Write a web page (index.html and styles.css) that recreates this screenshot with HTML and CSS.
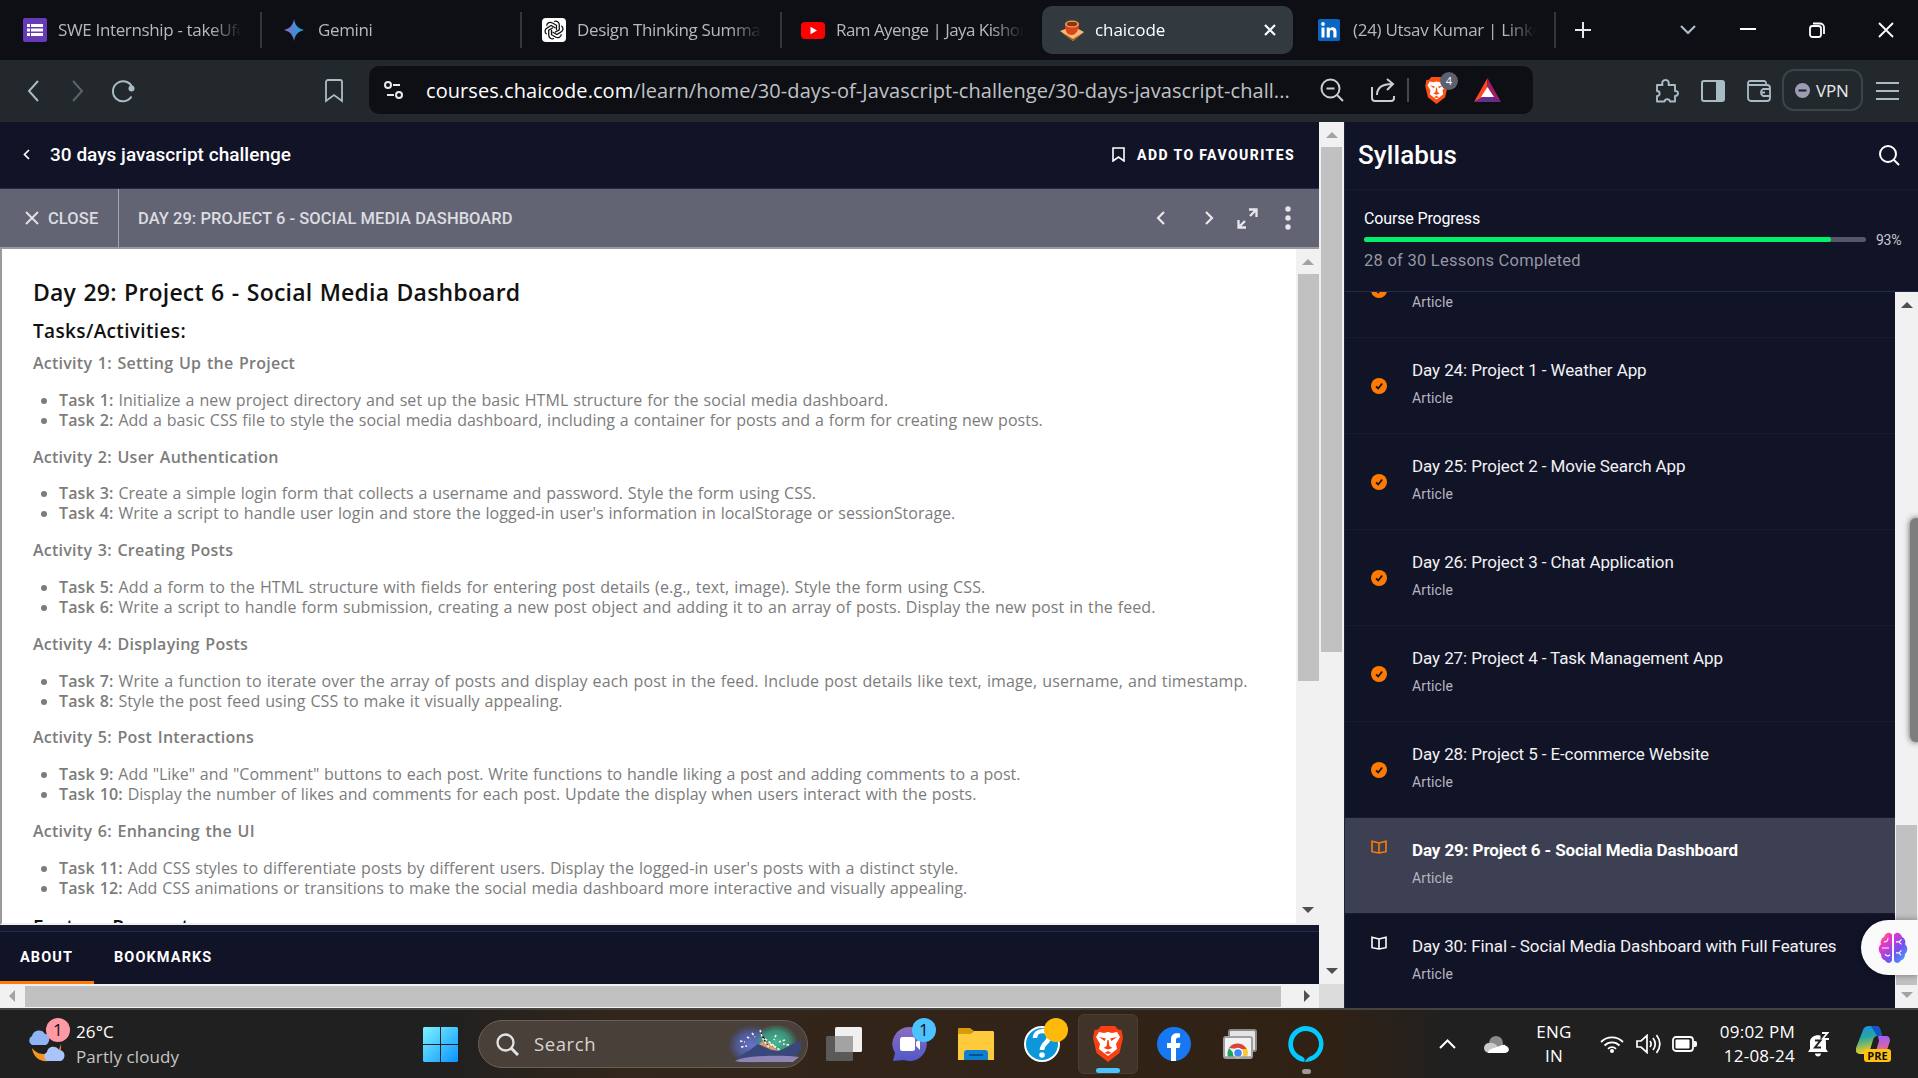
FILE: index.html
```html
<!DOCTYPE html>
<html lang="en">
<head>
<meta charset="utf-8">
<title>chaicode</title>
<link rel="stylesheet" href="styles.css">
</head>
<body>
<div class="screen">
  <header class="tabs">
    <div class="tab">
      <svg width="24" height="24" viewBox="0 0 24 24"><rect width="24" height="24" rx="2" fill="#673ab7"/><g fill="#fff"><rect x="4" y="6" width="3" height="3"/><rect x="8" y="6" width="12" height="3"/><rect x="4" y="10.500" width="3" height="3"/><rect x="8" y="10.500" width="12" height="3"/><rect x="4" y="15" width="3" height="3"/><rect x="8" y="15" width="12" height="3"/></g></svg>
      <span class="tab-title">SWE Internship - takeUforward</span>
    </div>
    <div class="tab">
      <svg width="24" height="24" viewBox="0 0 24 24"><defs><linearGradient id="gem" x1="0" x2="1"><stop offset="0" stop-color="#9168c0"/><stop offset=".45" stop-color="#5684d1"/><stop offset="1" stop-color="#1ba1e3"/></linearGradient></defs><path d="M11 1c1 6 4 9.500 10 11-6 1.500-9 5-10 11C10 17 7 13.500 1 12 7 10.500 10 7 11 1z" fill="url(#gem)"/></svg>
      <span class="tab-title">Gemini</span>
    </div>
    <div class="tab tab-chat">
      <svg width="24" height="24" viewBox="0 0 24 24"><rect width="24" height="24" rx="4" fill="#fff"/><g fill="none" stroke="#111" stroke-width="1.300"><path id="petal" d="M12 3.500c2.600-1.200 5.500.8 5.300 3.700v4.600l-4.300 2.500"/><use href="#petal" transform="rotate(60 12 12)"/><use href="#petal" transform="rotate(120 12 12)"/><use href="#petal" transform="rotate(180 12 12)"/><use href="#petal" transform="rotate(240 12 12)"/><use href="#petal" transform="rotate(300 12 12)"/></g></svg>
      <span class="tab-title">Design Thinking Summary</span>
    </div>
    <div class="tab tab-video">
      <svg width="24" height="24" viewBox="0 0 24 24"><rect y="4" width="24" height="17" rx="4" fill="#f00"/><path d="M9.500 8.700l6.500 3.800-6.500 3.800z" fill="#fff"/></svg>
      <span class="tab-title">Ram Ayenge | Jaya Kishori</span>
    </div>
    <div class="tab tab-active">
      <svg width="24" height="24" viewBox="0 0 24 24"><path d="M0 13l13-5 11 6-11 9z" fill="#f7b977"/><path d="M0 13l13 8 11-7-11 9z" fill="#a8561f"/><path d="M5 7c0 6 2 10 6.500 10S19 12 19 6z" fill="#d8471c"/><ellipse cx="12" cy="6" rx="7" ry="3.500" fill="#f3a35b"/><ellipse cx="12" cy="6" rx="5.300" ry="2.300" fill="#8e3413"/></svg>
      <span class="tab-title">chaicode</span>
      <svg width="12" height="12" viewBox="0 0 12 12"><path d="M1 1l10 10M11 1L1 11" stroke="#fff" stroke-width="2.200"/></svg>
    </div>
    <div class="tab tab-linked">
      <svg width="22" height="22" viewBox="0 0 22 22"><rect width="22" height="22" rx="2" fill="#0a66c2"/><g fill="#fff"><rect x="3.500" y="8.500" width="3" height="10"/><circle cx="5" cy="5" r="1.900"/><path d="M8.700 8.500h3v1.400c1.400-2.600 6.800-2.400 6.800 2.600v6h-3.100v-5.300c0-3-3.600-2.800-3.600 0v5.300h-3.100z"/></g></svg>
      <span class="tab-title">(24) Utsav Kumar | LinkedIn</span>
    </div>
    <div class="window-tools">
      <svg width="16" height="16" viewBox="0 0 16 16"><path d="M8 0v16M0 8h16" stroke="#e8e8e8" stroke-width="2"/></svg>
      <svg class="caret" width="16" height="10" viewBox="0 0 16 10"><path d="M1 1l7 7 7-7" fill="none" stroke="#a9bcc6" stroke-width="2.200"/></svg>
      <svg width="16" height="16" viewBox="0 0 16 16"><path d="M0 7h16" stroke="#fff" stroke-width="2"/></svg>
      <svg width="16" height="16" viewBox="0 0 16 16"><g fill="none" stroke="#fff" stroke-width="1.800"><rect x="1" y="4" width="11" height="11" rx="2.500"/><path d="M4 1.500h7a4 4 0 0 1 4 4v6.500"/></g></svg>
      <svg width="16" height="16" viewBox="0 0 16 16"><path d="M1 1l14 14M15 1L1 15" stroke="#fff" stroke-width="1.800"/></svg>
    </div>
  </header>

  <div class="toolbar">
    <svg class="nav-back" width="12" height="22" viewBox="0 0 12 22"><path d="M11 1L2 11l9 10" fill="none" stroke="#a9bcc6" stroke-width="2"/></svg>
    <svg class="nav-next" width="12" height="22" viewBox="0 0 12 22"><path d="M1 1l9 10-9 10" fill="none" stroke="#5b656b" stroke-width="2"/></svg>
    <svg class="nav-reload" width="24" height="24" viewBox="0 0 24 24"><path d="M20.500 17.500A10 10 0 1 1 21 8" fill="none" stroke="#a9bcc6" stroke-width="2"/><circle cx="20.500" cy="9.500" r="3" fill="#a9bcc6"/></svg>
    <svg class="nav-mark" width="18" height="24" viewBox="0 0 18 24"><path d="M1 3a2 2 0 0 1 2-2h12a2 2 0 0 1 2 2v19l-8-6-8 6z" fill="none" stroke="#a9bcc6" stroke-width="1.800"/></svg>
    <div class="omnibox">
      <svg width="19" height="18" viewBox="0 0 19 18"><g fill="none" stroke="#e6e9ea" stroke-width="2"><circle cx="4" cy="4" r="3"/><path d="M9 4h7M3 14h7"/><circle cx="15" cy="14" r="3"/></g></svg>
      <div class="url"><b>courses.chaicode.com</b>/learn/home/30-days-of-Javascript-challenge/30-days-javascript-chall...</div>
      <svg class="i-zoom" width="24" height="24" viewBox="0 0 24 24"><g fill="none" stroke="#c9ced1" stroke-width="2"><circle cx="10.500" cy="10.500" r="9"/><path d="M17 17l6 6M6.500 10.500h8"/></g></svg>
      <svg class="i-share" width="24" height="24" viewBox="0 0 24 24"><g fill="none" stroke="#c9ced1" stroke-width="2"><path d="M1 9v11a3 3 0 0 0 3 3h16a3 3 0 0 0 3-3v-2M6 17c0-7 4-11 15-11M16 1l6 5-6 6"/></g></svg>
      <i class="divider"></i>
      <div class="shield">
        <svg width="23" height="27" viewBox="0 0 30 36"><path d="M8 0h14l3 3.500 3.500.5L30 12l-3.500 15L15 36 3.500 27 0 12l1.500-8L5 3.500z" fill="#fb4f14"/><path d="M15 6l4 1 5-1 3 5-4 7 1 5-5 4-4 3-4-3-5-4 1-5-4-7 3-5 5 1z" fill="#fff"/><path d="M6 11l7 1.500-1.500 2.500zM24 11l-7 1.500 1.500 2.500zM14.400 14h1.200l.8 6 3 2-4.400 1.600L10.600 22l3-2zM11.500 27l3.500-2 3.500 2-3.500 1z" fill="#fb4f14"/></svg>
        <span class="count">4</span>
      </div>
      <svg class="i-bat" width="27" height="24" viewBox="0 0 27 24"><path d="M13.500 0L0 24l13.500-7z" fill="#ff4724"/><path d="M13.500 0L27 24l-13.500-8z" fill="#9e1f63"/><path d="M0 24l13.500-8L27 24z" fill="#662d91"/><path d="M13.500 9L7 19h13z" fill="#fff"/></svg>
    </div>
    <svg class="i-ext" width="24" height="24" viewBox="0 0 24 24"><path d="M2 6h5.500c-1-3 .5-5 3-5s4 2 3 5H20v6c4-.5 4 5 0 5v5.500h-5c-.5-3-5-3-5.500 0H2V17c3.500 0 3.500-5 0-5z" fill="none" stroke="#a9bcc6" stroke-width="1.900" stroke-linejoin="round"/></svg>
    <svg class="i-side" width="24" height="22" viewBox="0 0 24 22"><rect x="1" y="1" width="22" height="20" rx="2" fill="none" stroke="#a9bcc6" stroke-width="2"/><path d="M15 1h8v20h-8z" fill="#a9bcc6"/></svg>
    <svg class="i-side" width="24" height="22" viewBox="0 0 24 22"><g fill="none" stroke="#a9bcc6" stroke-width="1.800"><path d="M19 5V3a2 2 0 0 0-2-2H3a2 2 0 0 0 0 4h17a3 3 0 0 1 3 3v10a3 3 0 0 1-3 3H4a3 3 0 0 1-3-3V3M23 9h-7a4 4 0 0 0 0 7h7M15 12.500h3"/></g></svg>
    <div class="vpn"><svg width="15" height="15" viewBox="0 0 15 15"><circle cx="7.500" cy="7.500" r="7.500" fill="#9a9cb4"/><path d="M3.500 7.500h8" stroke="#1c2226" stroke-width="2"/></svg>VPN</div>
    <svg class="i-menu" width="23" height="18" viewBox="0 0 23 18"><path d="M0 1h23M0 9h23M0 17h23" stroke="#a9bcc6" stroke-width="2"/></svg>
  </div>

  <div class="page">
    <main class="main">
      <div class="course-bar">
        <svg width="7" height="11" viewBox="0 0 7 11"><path d="M6 1L1.500 5.500 6 10" fill="none" stroke="#fff" stroke-width="1.700"/></svg>
        <span class="course-name">30 days javascript challenge</span>
        <svg class="push" width="13" height="15" viewBox="0 0 13 15"><path d="M1 1h11v13l-5.500-4L1 14z" fill="none" stroke="#fff" stroke-width="1.600"/></svg>
        <span class="favourite">ADD TO FAVOURITES</span>
      </div>
      <div class="lesson-bar">
        <div class="close"><svg width="14" height="14" viewBox="0 0 14 14"><path d="M1 1l12 12M13 1L1 13" stroke="#e4e4e8" stroke-width="1.800"/></svg>CLOSE</div>
        <span class="lesson-name">DAY 29: PROJECT 6 - SOCIAL MEDIA DASHBOARD</span>
        <div class="lesson-tools">
          <svg width="9" height="14" viewBox="0 0 9 14"><path d="M8 1L2 7l6 6" fill="none" stroke="#e8e8ec" stroke-width="2.200"/></svg>
          <svg width="9" height="14" viewBox="0 0 9 14"><path d="M1 1l6 6-6 6" fill="none" stroke="#e8e8ec" stroke-width="2.200"/></svg>
          <svg class="expand" width="21" height="21" viewBox="0 0 21 21"><g fill="none" stroke="#e8e8ec" stroke-width="2.300"><path d="M12 1.500h7.500V9M19.500 1.500L13 8M9 19.500H1.500V12M1.500 19.500L8 13"/></g></svg>
          <svg class="dots" width="6" height="24" viewBox="0 0 6 24"><g fill="#e8e8ec"><circle cx="3" cy="3" r="2.700"/><circle cx="3" cy="12" r="2.700"/><circle cx="3" cy="21" r="2.700"/></g></svg>
        </div>
      </div>
      <div class="frame">
        <article class="article">
          <h2>Day 29: Project 6 - Social Media Dashboard</h2>
          <h3>Tasks/Activities:</h3>
          <p>Activity 1: Setting Up the Project</p>
          <ul><li>​<b>Task 1:</b> Initialize a new project directory and set up the basic HTML structure for the social media dashboard.</li><li class="snug"><b>Task 2:</b> Add a basic CSS file to style the social media dashboard, including a container for posts and a form for creating new posts.</li></ul>
          <p>Activity 2: User Authentication</p>
          <ul><li class="snug"><b>Task 3:</b> Create a simple login form that collects a username and password. Style the form using CSS.</li><li class="snug"><b>Task 4:</b> Write a script to handle user login and store the logged-in user's information in localStorage or sessionStorage.</li></ul>
          <p>Activity 3: Creating Posts</p>
          <ul><li class="loose"><b>Task 5:</b> Add a form to the HTML structure with fields for entering post details (e.g., text, image). Style the form using CSS.</li><li><b>Task 6:</b> Write a script to handle form submission, creating a new post object and adding it to an array of posts. Display the new post in the feed.</li></ul>
          <p>Activity 4: Displaying Posts</p>
          <ul><li class="loose"><b>Task 7:</b> Write a function to iterate over the array of posts and display each post in the feed. Include post details like text, image, username, and timestamp.</li><li><b>Task 8:</b> Style the post feed using CSS to make it visually appealing.</li></ul>
          <p>Activity 5: Post Interactions</p>
          <ul><li class="tight"><b>Task 9:</b> Add "Like" and "Comment" buttons to each post. Write functions to handle liking a post and adding comments to a post.</li><li class="snug"><b>Task 10:</b> Display the number of likes and comments for each post. Update the display when users interact with the posts.</li></ul>
          <p>Activity 6: Enhancing the UI</p>
          <ul><li><b>Task 11:</b> Add CSS styles to differentiate posts by different users. Display the logged-in user's posts with a distinct style.</li><li class="snug"><b>Task 12:</b> Add CSS animations or transitions to make the social media dashboard more interactive and visually appealing.</li></ul>
          <h3>Feature Request:</h3>
        </article>
        <div class="vbar vbar-frame"><i class="up dim"></i><i class="thumb"></i><i class="down"></i></div>
      </div>
      <nav class="sections"><span class="section section-on">ABOUT</span><span class="section">BOOKMARKS</span></nav>
    </main>
    <div class="vbar vbar-page"><i class="up dim"></i><i class="thumb"></i><i class="down"></i></div>
    <div class="hbar"><i class="left"></i><i class="thumb"></i><i class="right"></i></div>
    <div class="corner"></div>

    <aside class="side">
      <div class="side-head"><span>Syllabus</span><svg width="21" height="21" viewBox="0 0 21 21"><g fill="none" stroke="#fff" stroke-width="2"><circle cx="9" cy="9" r="8"/><path d="M14.500 14.500l5.500 5.500"/></g></svg></div>
      <div class="progress">
        <div class="progress-label">Course Progress</div>
        <div class="meter"><div class="track"><div class="fill" style="width:93%"></div></div><span>93%</span></div>
        <div class="progress-note">28 of 30 Lessons Completed</div>
      </div>
      <div class="list-wrap">
        <div class="list">
          <svg class="defs" width="0" height="0"><symbol id="done" viewBox="0 0 16 16"><circle cx="8" cy="8" r="8" fill="#ff7a00"/><path d="M5 8.300l2.200 2.200 4-5" fill="none" stroke="#111327" stroke-width="1.800"/></symbol><symbol id="book" viewBox="0 0 16 14"><path d="M1 1.300L8 3l7-1.700v10.400L8 13l-7-1.300zM8 3v10" fill="none" stroke="currentColor" stroke-width="1.600"/></symbol></svg>
          <div class="item item-first"><svg width="16" height="16"><use href="#done"/></svg><div><div class="kind">Article</div></div></div>
          <div class="item"><svg width="16" height="16"><use href="#done"/></svg><div><div class="name">Day 24: Project 1 - Weather App</div><div class="kind">Article</div></div></div>
          <div class="item"><svg width="16" height="16"><use href="#done"/></svg><div><div class="name">Day 25: Project 2 - Movie Search App</div><div class="kind">Article</div></div></div>
          <div class="item"><svg width="16" height="16"><use href="#done"/></svg><div><div class="name">Day 26: Project 3 - Chat Application</div><div class="kind">Article</div></div></div>
          <div class="item"><svg width="16" height="16"><use href="#done"/></svg><div><div class="name">Day 27: Project 4 - Task Management App</div><div class="kind">Article</div></div></div>
          <div class="item"><svg width="16" height="16"><use href="#done"/></svg><div><div class="name">Day 28: Project 5 - E-commerce Website</div><div class="kind">Article</div></div></div>
          <div class="item item-on"><svg width="16" height="14"><use href="#book"/></svg><div><div class="name">Day 29: Project 6 - Social Media Dashboard</div><div class="kind">Article</div></div></div>
          <div class="item item-open"><svg width="16" height="14"><use href="#book"/></svg><div><div class="name">Day 30: Final - Social Media Dashboard with Full Features</div><div class="kind">Article</div></div></div>
        </div>
        <div class="vbar vbar-list"><i class="up"></i><i class="thumb"></i><i class="down dim"></i></div>
      </div>
    </aside>
    <div class="edge-thumb"></div>
    <div class="brain">
      <svg width="30" height="34" viewBox="0 0 30 28" preserveAspectRatio="none"><defs><linearGradient id="br" x1="0" y1="0" x2="1" y2="1"><stop offset="0" stop-color="#ff9a3c"/><stop offset=".25" stop-color="#f236c0"/><stop offset=".6" stop-color="#7a4df0"/><stop offset="1" stop-color="#2fb4ff"/></linearGradient></defs><path d="M14 3c-3-3-7-1-8 2-3 1-4 4-3 6-3 2-3 6 0 8 0 3 2 5 4 5 2 3 6 3 7 0zM16 3c3-3 7-1 8 2 3 1 4 4 3 6 3 2 3 6 0 8 0 3-2 5-4 5-2 3-6 3-7 0z" fill="url(#br)"/><path d="M6 9c3 0 4-2 4-3.500M4 14h7M7 19c1 2 4 2 5 .5M18 9h3l2.500-2M21 9l2.500 2M18 18h3l2.500-2M21 18l2 2" fill="none" stroke="#fff" stroke-width="1"/></svg>
    </div>
  </div>

  <footer class="taskbar">
    <div class="weather">
      <svg width="38" height="40" viewBox="0 0 38 40"><path d="M33 20c-2 9-9 13-16 10-5 0-9-1-13-6 1 9 8 14 16 13 9-1 14-8 13-17z" fill="#f5941f"/><path d="M4 21a5 5 0 0 1 0-9c1-6 10-8 13-2 5 0 6 8 1 11z" fill="#8fb4f5"/><path d="M19 37a5 5 0 0 1 0-9c1-6 9-7 12-2 7 0 7 9 2 11z" fill="#a9c4fa"/></svg>
      <span class="badge pink">1</span>
      <div class="weather-text"><div>26°C</div><div class="soft">Partly cloudy</div></div>
    </div>
    <svg class="start" width="35" height="35" viewBox="0 0 35 35"><defs><linearGradient id="win" x1="0" y1="0" x2="1" y2="1"><stop offset="0" stop-color="#7df3ff"/><stop offset="1" stop-color="#0a93ff"/></linearGradient></defs><path d="M1 0h16v17H0V1zM18 0h16l1 1v16H18zM0 18h17v17H1l-1-1zM18 18h17v16l-1 1H18z" fill="url(#win)"/></svg>
    <div class="search">
      <svg width="23" height="23" viewBox="0 0 23 23"><g fill="none" stroke="#e2e2e2" stroke-width="2.300"><circle cx="9.500" cy="9.500" r="8"/><path d="M15 15l7 7" stroke-width="3"/></g></svg>
      <span>Search</span>
      <svg class="scene" width="76" height="38" viewBox="0 0 76 38"><defs><radialGradient id="g1"><stop offset="0" stop-color="#6474cc"/><stop offset=".6" stop-color="#5263b0" stop-opacity=".8"/><stop offset="1" stop-color="#4a5bb0" stop-opacity="0"/></radialGradient><radialGradient id="g2"><stop offset="0" stop-color="#45b898"/><stop offset=".6" stop-color="#3aa588" stop-opacity=".8"/><stop offset="1" stop-color="#2f9f84" stop-opacity="0"/></radialGradient></defs><ellipse cx="24" cy="20" rx="24" ry="20" fill="url(#g1)"/><ellipse cx="48" cy="17" rx="22" ry="18" fill="url(#g2)"/><path d="M28 22l8-7 16 12-6 2z" fill="#d99a6a"/><path d="M7 35l8-6 7-4 8-6 14 6 7 1 22-11v9l-8 11z" fill="#39477a"/><path d="M7 36c10-6 50-6 64-4l-6 5H12z" fill="#8f85b5"/><g stroke="#fff4dc" stroke-width="1.600" stroke-dasharray="2.500 1.800"><path d="M32 5l3 9 7 10M42 19l10 6M37 14l11 8M12 16l5 1M13 22l6-1M19 12l4 2M24 8l3 4M48 10l-2 5M57 15l-6 2M61 20l-6-1"/></g></svg>
    </div>
    <div class="apps">
      <div class="app"><svg width="36" height="36" viewBox="0 0 36 36"><rect x="0" y="10" width="27" height="25" rx="1.500" fill="#5c5a58"/><rect x="9" y="1" width="27" height="25" rx="1.500" fill="#f0f0f0"/><path d="M9 10h18v16H9z" fill="#a3a3a3"/></svg></div>
      <div class="app"><svg width="36" height="36" viewBox="0 0 36 36"><defs><linearGradient id="tm" x2="0" y2="1"><stop offset="0" stop-color="#8b6fc0"/><stop offset="1" stop-color="#5058c8"/></linearGradient></defs><path d="M18 1a17 17 0 1 1-6 33l-11 1 2-8A17 17 0 0 1 18 1z" fill="url(#tm)"/><rect x="8" y="11" width="15" height="14" rx="2.500" fill="#fff"/><path d="M24 16l4-3v11l-4-4z" fill="#fff"/></svg><span class="badge blue">1</span></div>
      <div class="app"><svg width="36" height="34" viewBox="0 0 36 34"><path d="M0 2a1 1 0 0 1 1-1h11l4 3-4 3H0z" fill="#d99a0b"/><path d="M0 7h12l4-3h19l1 1v28H0z" fill="#ffcb3d"/><path d="M6 33V26a3 3 0 0 1 3-3h18a3 3 0 0 1 3 3v7z" fill="#0f7fd0"/><path d="M11 28h14" stroke="#0a4f94" stroke-width="2"/></svg></div>
      <div class="app"><svg width="36" height="36" viewBox="0 0 36 36"><circle cx="18" cy="18" r="17" fill="#0b97d9" stroke="#fff" stroke-width="2"/><path d="M11 12c0-9 14-9 14-1 0 6-7 6-7 13" fill="none" stroke="#fff" stroke-width="4.500"/><circle cx="18" cy="29" r="2.800" fill="#fff"/></svg><span class="badge amber"></span></div>
      <div class="app app-on"><svg width="30" height="36" viewBox="0 0 30 36"><path d="M8 0h14l3 3.500 3.500.5L30 12l-3.500 15L15 36 3.500 27 0 12l1.500-8L5 3.500z" fill="#fb3f14"/><path d="M15 6l4 1 5-1 3 5-4 7 1 5-5 4-4 3-4-3-5-4 1-5-4-7 3-5 5 1z" fill="#fff"/><path d="M6 11l7 1.500-1.500 2.500zM24 11l-7 1.500 1.500 2.500zM14.400 14h1.200l.8 6 3 2-4.400 1.600L10.600 22l3-2zM11.500 27l3.500-2 3.500 2-3.500 1z" fill="#fb3f14"/></svg><i class="mark"></i></div>
      <div class="app"><svg width="34" height="34" viewBox="0 0 34 34"><circle cx="17" cy="17" r="17" fill="#1877f2"/><path d="M14 34V21h-4v-5h4v-4c0-5 4-6.500 9-5.500v4c-3-.3-4 .5-4 2.500v3h4.500l-1 5H19v13z" fill="#fff"/></svg></div>
      <div class="app"><svg width="34" height="30" viewBox="0 0 34 30"><rect x="6" y="1" width="27" height="21" rx="2" fill="#e4e4e4" stroke="#8a8a8a" stroke-width="2"/><rect x="1" y="8" width="28" height="21" rx="2" fill="#f2f2f2" stroke="#a0a0a0" stroke-width="2"/><path d="M15 18h8a10 10 0 0 1 1 10h-9z" fill="#fbc933"/><path d="M6 19c4-6 14-6 17.500 1H14z" fill="#db4437"/><path d="M6 19l8 9H5c-1-3-.5-6 1-9z" fill="#1da462"/><circle cx="15" cy="24" r="4.500" fill="#4285f4" stroke="#fff" stroke-width="1.500"/><path d="M2 28h26" stroke="#a0a0a0" stroke-width="1.500"/></svg></div>
      <div class="app"><svg width="36" height="36" viewBox="0 0 36 36"><path d="M18 0a18 18 0 0 0-3 35.700c1 .2 1.700-.3 1.700-1.200 0-1.500-.5-3-3-4.200A13 13 0 1 1 22 30.400c-3 1.600-4.500 3.600-5 5.600A18 18 0 0 0 18 0z" fill="#00caff"/></svg><i class="mark idle"></i></div>
    </div>
    <div class="tray">
      <svg width="17" height="10" viewBox="0 0 17 10"><path d="M1 9l7.500-7.500L16 9" fill="none" stroke="#fff" stroke-width="2"/></svg>
      <svg class="t-cloud" width="25" height="17" viewBox="0 0 25 17"><circle cx="12" cy="7" r="7" fill="#8b8b8b"/><path d="M5 17a5 5 0 0 1 0-10c6-1 9 3 13 10z" fill="#c9c9c9"/><path d="M4 17c0-4 6-5 9-6s7-4 9-1c4 1 4 7-1 7z" fill="#fff"/></svg>
      <div class="lang">ENG<br>IN</div>
      <svg class="t-wifi" width="24" height="18" viewBox="0 0 24 18"><g fill="none" stroke="#fff" stroke-width="1.800"><path d="M1 7a15.500 15.500 0 0 1 22 0M4.500 10.500a10.500 10.500 0 0 1 15 0M8 13.800a5.700 5.700 0 0 1 8 0"/></g><circle cx="12" cy="16" r="2" fill="#fff"/></svg>
      <svg class="t-vol" width="25" height="20" viewBox="0 0 25 20"><g fill="none" stroke="#fff" stroke-width="1.700"><path d="M1 7h4l6-5.500v17L5 13H1zM14 7c1.500 2 1.500 4 0 6M17 4c3 4 3 8 0 12M20.500 1c4.500 6 4.500 12 0 18"/></g></svg>
      <svg class="t-bat" width="25" height="16" viewBox="0 0 25 16"><rect x="1" y="1" width="20" height="14" rx="3" fill="none" stroke="#fff" stroke-width="1.800"/><rect x="3.500" y="3.500" width="14" height="9" rx="1" fill="#fff"/><path d="M22 5h1a2 2 0 0 1 2 2v2a2 2 0 0 1-2 2h-1z" fill="#fff"/></svg>
      <div class="clock">09:02 PM<br>12-08-24</div>
      <svg class="t-bell" width="22" height="26" viewBox="0 0 22 26"><path d="M2 18v-7C2 2 18 2 18 11v7l2 3H0zM7 22.500h6c0 4-6 4-6 0z" fill="#fff"/><path d="M12.500 0H22v9h-9.500z" fill="#222"/><path d="M14 2h5.500l-5 6H21" fill="none" stroke="#fff" stroke-width="1.800"/><path d="M7 9.500h5.500L7 16.500h6" fill="none" stroke="#222" stroke-width="2"/></svg>
      <div class="copilot">
        <svg width="34" height="30" viewBox="0 0 34 30"><defs><linearGradient id="c1" x2=".2" y2="1"><stop offset="0" stop-color="#1c8df0"/><stop offset=".45" stop-color="#25a6a0"/><stop offset="1" stop-color="#f5cf1b"/></linearGradient><linearGradient id="c2" x2="0" y2="1"><stop offset="0" stop-color="#a25cf5"/><stop offset="1" stop-color="#ff6f6f"/></linearGradient></defs><path d="M7 4c1-3 3-4 6-4h7c3 0 4 2 5 6l1 4h-4c-3 0-4 1-5 4l-3 10c-1 3-3 4-6 4H4c-3 0-5-2-4-6z" fill="url(#c1)"/><path d="M15 0h5c3 0 4 2 5 6l1 4h-5z" fill="#1354c9"/><path d="M22 10h8c3 0 4 2 4 5l-4 12c-1 3-4 3-6 3h-8c2 0 3-2 4-5l3-10z" fill="url(#c2)"/></svg>
        <span class="pre">PRE</span>
      </div>
    </div>
  </footer>
</div>
</body>
</html>
```
FILE: styles.css
```css
* { box-sizing: border-box; }
body { margin: 0; background: #0e0f14; }
svg { display: block; flex: none; }
.screen {
  width: 1918px; height: 1078px; overflow: hidden;
  display: grid; grid-template-rows: 60px 62px 886px 70px;
  font-family: "Open Sans", "Noto Sans", sans-serif;
}

/* tab strip */
.tabs {
  display: grid; align-items: center; background: #0e0f14; color: #b6b8ba;
  grid-template-columns: 262px 260px 260px 260px 251px 263px 1fr;
  font-size: 17px; letter-spacing: -.35px;
}
.tab { display: flex; align-items: center; height: 36px; padding: 0 16px 0 23px; border-right: 2px solid #33373a; }
.tab-title {
  flex: 1; margin-left: 11px; padding-bottom: 2px; white-space: nowrap; overflow: hidden;
  -webkit-mask-image: linear-gradient(90deg, #000 82%, transparent 99%);
}
.tab:nth-child(2) { padding-left: 21px; }
.tab-chat { padding-left: 20px; }
.tab-video { padding-left: 19px; border: 0; letter-spacing: -.55px; }
.tab-active { height: 48px; border: 0; border-radius: 10px; background: #323a3f; color: #fff; padding: 0 17px 0 18px; letter-spacing: -.05px; }
.tab-linked { padding-left: 25px; letter-spacing: -.3px; }
.tab-linked .tab-title { margin-left: 13px; }
.window-tools { display: flex; align-items: center; padding-left: 19px; }
.window-tools svg + svg { margin-left: 53px; }
.window-tools .caret { margin-left: 89px !important; }
.window-tools .caret + svg { margin-left: 44px; }

/* address row */
.toolbar { display: flex; align-items: center; background: #22282b; }
.nav-back { margin-left: 27px; }
.nav-next { margin-left: 33px; }
.nav-reload { margin-left: 27px; }
.nav-mark { margin-left: 190px; }
.omnibox {
  display: flex; align-items: center; width: 1164px; height: 48px; margin: -2px 0 0 26px;
  padding-left: 15px; border-radius: 10px; background: #0e0f14;
}
.url { width: 866px; margin-left: 23px; white-space: nowrap; color: #bfc3c6; font-size: 20px; letter-spacing: .06px; }
.url b { font-weight: 400; color: #fff; }
.i-zoom { margin-left: 28px; }
.i-share { margin-left: 27px; }
.divider { width: 2px; height: 24px; margin: 0 16px 0 12px; background: #45494c; }
.shield { position: relative; }
.count {
  position: absolute; left: 15px; top: -5px; width: 18px; height: 18px; border-radius: 9px;
  background: #5c6170; color: #fff; font-size: 11px; line-height: 18px; text-align: center; letter-spacing: 0;
}
.i-bat { margin-left: 26px; }
.i-ext { margin-left: 122px; }
.i-side { margin-left: 22px; }
.vpn {
  display: flex; align-items: center; gap: 6px; width: 81px; height: 42px; margin: -2px 0 0 11px; padding-left: 11px;
  border: 2px solid #3a454a; border-radius: 12px; color: #e8eaeb; font-size: 17px; letter-spacing: -.2px;
}
.i-menu { margin-left: 13px; }

/* page */
.page {
  position: relative; display: grid; min-height: 0;
  grid-template-columns: 1319px 25px 574px; grid-template-rows: 862px 24px;
  background: #111327; color: #fff; font-family: Roboto, sans-serif;
}
.main { display: grid; grid-template-rows: 66px 59px 678px 59px; min-height: 0; }
.course-bar { display: flex; align-items: center; padding: 0 24px 1px 23px; }
.course-name { margin-left: 20px; font-size: 19px; font-weight: 500; letter-spacing: .02px; }
.push { margin-left: auto; }
.favourite { margin-left: 12px; font-size: 14px; font-weight: 800; letter-spacing: 1.4px; }
.lesson-bar { display: flex; align-items: center; background: #626473; border-top: 1px solid #232a4d; color: #dcdce1; font-size: 16.500px; font-weight: 500; }
.close { display: flex; align-items: center; gap: 9px; width: 119px; height: 100%; padding-left: 25px; border-right: 1px solid #a5a6b0; letter-spacing: .1px; }
.lesson-name { margin-left: 19px; letter-spacing: .05px; }
.lesson-tools { display: flex; align-items: center; margin-left: auto; padding-right: 28px; }
.lesson-tools svg + svg { margin-left: 40px; }
.lesson-tools .expand { margin-left: 23px !important; }
.lesson-tools .dots { margin-left: 27px !important; }
.frame {
  display: grid; grid-template-columns: 1fr 23px; min-height: 0; background: #fff;
  border: 2px solid #9a9a9a; border-right: 0; border-bottom-color: #eee;
}
.article {
  overflow: hidden; padding: 28px 0 0 31px; color: #7c7c7c;
  font: 16px/20px "Open Sans", "Noto Sans", sans-serif; letter-spacing: .07px; word-spacing: .7px;
}
.article h2 { margin: 0 0 12px; color: #111; font-size: 23px; line-height: 30px; font-weight: 600; letter-spacing: .2px; word-spacing: 1.200px; }
.article h3 { margin: 0 0 10px; color: #111; font-size: 19px; line-height: 24px; font-weight: 600; letter-spacing: .35px; }
.article p { margin: 0 0 16.8px; font-weight: 600; letter-spacing: .25px; word-spacing: 1.200px; }
.article ul { margin: 0 0 16.8px; padding-left: 26px; }
.article li { white-space: nowrap; }
.article b { font-weight: 600; letter-spacing: .12px; }
.loose { letter-spacing: .13px; }
.snug { letter-spacing: .02px; }
.tight { letter-spacing: -.04px; }
.sections { display: flex; border-top: 6px solid #15182f; box-shadow: inset 0 1px #242a47; font-size: 14.500px; font-weight: 700; letter-spacing: 1.1px; }
.section { display: flex; align-items: center; padding: 0 20px; height: 53px; }
.section-on { width: 94px; border-bottom: 3px solid #ff7a00; padding-top: 3px; border-radius: 2px 2px 0 0; }

/* scrollbars */
.vbar { display: flex; flex-direction: column; align-items: center; background: #f1f1f1; }
.vbar i, .hbar i { display: block; flex: none; }
.vbar .up, .vbar .down { width: 0; height: 0; border: 6px solid transparent; border-top: 0; border-bottom-color: #505050; }
.vbar .down { border: 6px solid transparent; border-bottom: 0; border-top-color: #505050; margin-top: auto; }
.vbar .up.dim { border-bottom-color: #a3a3a3; }
.vbar .down.dim { border-bottom: 0; border-top-color: #a3a3a3; }
.vbar .thumb { width: 21px; background: #c1c1c1; }
.vbar-page { padding: 10px 0; }
.vbar-page .thumb { margin-top: 9px; height: 505px; }
.vbar-frame { padding: 10px 0; }
.vbar-frame .thumb { margin: 9px 0 0 2px; height: 407px; }
.vbar-list { padding: 10px 0; }
.vbar-list .thumb { margin-top: 517px; height: 160px; }
.hbar { grid-row: 2; grid-column: 1; display: flex; align-items: center; padding: 0 9px; background: #f1f1f1; }
.left, .right { width: 0; height: 0; border: 6px solid transparent; }
.left { border-left: 0; border-right-color: #a3a3a3; }
.right { border-right: 0; border-left-color: #505050; margin-left: auto; }
.hbar .thumb { width: 1256px; height: 21px; margin-left: 10px; background: #c1c1c1; }
.corner { grid-row: 2; grid-column: 2; background: #dcdcdc; }

/* syllabus */
.side { grid-row: 1 / 3; grid-column: 3; display: grid; grid-template-rows: 68px 102px 1fr; min-height: 0; border-left: 1px solid #20243c; }
.side-head { display: flex; align-items: center; justify-content: space-between; padding: 0 18px 1px 13px; border-bottom: 1px solid #181b30; font-size: 26px; font-weight: 500; letter-spacing: .1px; }
.progress { padding: 19px 16px 0 19px; border-bottom: 1px solid #242a47; }
.progress-label { font-size: 16px; line-height: 20px; letter-spacing: -.15px; }
.meter { display: flex; align-items: center; gap: 10px; height: 21px; color: #c9cad2; font-size: 14px; letter-spacing: -.3px; }
.track { width: 502px; height: 5px; border-radius: 3px; background: #555769; }
.fill { height: 5px; border-radius: 3px; background: #00f06a; }
.progress-note { color: #9697a2; font-size: 16.500px; line-height: 22px; letter-spacing: .25px; }
.list-wrap { display: grid; grid-template-columns: 1fr 23px; min-height: 0; }
.list { display: flex; flex-direction: column; overflow: hidden; }
.defs { position: absolute; }
.item { display: flex; flex: none; height: 96px; padding-left: 26px; border-bottom: 1px solid #171a2f; }
.item > svg { margin: 40px 25px 0 0; }
.item > div { padding-top: 21px; }
.item-first { height: 46px; }
.item-first > svg { margin-top: -10px; }
.item-first > div { padding-top: 0; }
.item-first .kind { margin-top: 0; }
.name { font-size: 17px; line-height: 22px; color: #f2f2f4; letter-spacing: -.1px; }
.kind { margin-top: 7px; font-size: 14px; line-height: 20px; color: #b5b6c0; letter-spacing: .1px; }
.item-on { background: #3d4052; color: #ff7a00; }
.item-on .name { font-weight: 700; color: #fff; }
.item-on > svg, .item-open > svg { margin-top: 22px; }
.edge-thumb { position: absolute; left: 1910px; top: 396px; width: 12px; height: 224px; border-radius: 6px; background: #7e7e7e; box-shadow: 0 0 6px #555; }
.brain { position: absolute; left: 1861px; top: 798px; width: 57px; height: 55px; display: flex; align-items: center; padding-left: 17px; border-radius: 28px 0 0 28px; background: #fafafa; box-shadow: 0 0 6px #0006; }

/* taskbar */
.taskbar {
  display: flex; align-items: center; border-top: 2px solid #454340; color: #fff; font-size: 17px; letter-spacing: .1px;
  background: linear-gradient(90deg, #202020 0, #202020 440px, #33261a 620px, #302115 1330px, #202020 1450px);
}
.weather { position: relative; display: flex; align-items: center; width: 395px; padding-left: 28px; margin-right: 28px; }
.badge { position: absolute; width: 24px; height: 24px; border-radius: 12px; color: #111; line-height: 24px; text-align: center; }
.pink { left: 46px; top: -2px; background: #ff99a4; }
.weather-text { margin: -1px 0 0 10px; line-height: 25px; }
.soft { color: #c5c5c5; }
.search {
  display: flex; align-items: center; width: 330px; height: 48px; margin-left: 20px; padding-left: 17px;
  border: 1px solid #685f58; border-radius: 24px; background: #4a403a; color: #d8d4d2; font-size: 18.500px; letter-spacing: .6px;
}
.search span { margin-left: 15px; padding-bottom: 1px; }
.scene { margin-left: auto; margin-right: 3px; }
.apps { display: flex; margin-left: 6px; gap: 6px; }
.app { position: relative; display: flex; align-items: center; justify-content: center; width: 60px; height: 60px; border-radius: 6px; }
.app-on { background: #403327; border: 1px solid #4b3f34; }
.blue { left: 32px; top: 4px; background: #4cc2ff; }
.amber { left: 32px; top: 4px; background: #ffb90a; }
.mark { position: absolute; left: 17px; bottom: 0; width: 24px; height: 5px; border-radius: 3px; background: #4cc2ff; }
.idle { left: 26px; width: 9px; background: #9a9a9a; }
.tray { display: flex; align-items: center; margin-left: auto; padding-right: 28px; text-align: center; line-height: 24px; }
.t-cloud { margin-left: 28px; }
.lang { width: 42px; margin-left: 24px; letter-spacing: .3px; }
.t-wifi { margin-left: 25px; }
.t-vol { margin-left: 12px; }
.t-bat { margin-left: 11px; }
.clock { width: 80px; margin: -1px 0 0 18px; text-align: right; white-space: nowrap; letter-spacing: .25px; }
.t-bell { margin-left: 13px; }
.copilot { position: relative; margin-left: 26px; padding-bottom: 6px; }
.pre { position: absolute; left: 8px; top: 23px; width: 27px; height: 13px; border-radius: 3px; background: #ffc20e; color: #111; font: 700 11px/13px "Open Sans", sans-serif; text-align: center; }
```
